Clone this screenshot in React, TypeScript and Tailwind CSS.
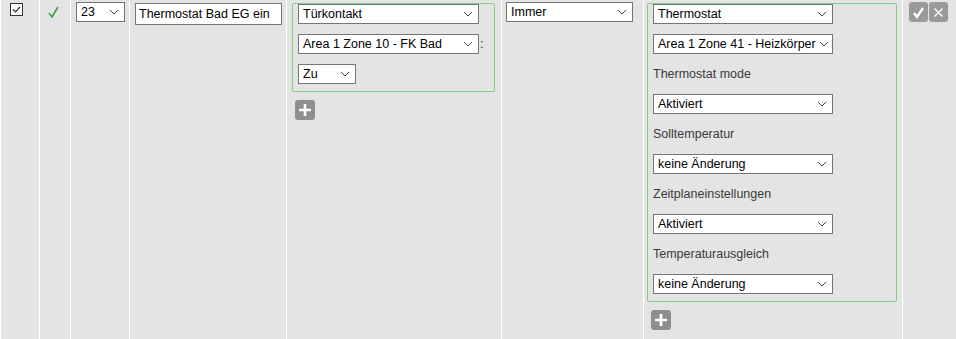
import type { ReactNode } from 'react';

const font = { fontFamily: '"Liberation Sans", Arial, sans-serif' };

function Chevron() {
  return (
    <svg width="10" height="6" viewBox="0 0 10 6" className="shrink-0">
      <path d="M1 1l4 4 4-4" fill="none" stroke="#444" strokeWidth="1" />
    </svg>
  );
}

function Select({ value, w }: { value: string; w: string }) {
  return (
    <div className={`${w} flex h-[20px] items-center justify-between gap-[3px] overflow-hidden border border-[#767676] bg-white pl-[4px] pr-[5px] text-[12.5px] leading-none text-black`}>
      <span className="whitespace-nowrap">{value}</span>
      <Chevron />
    </div>
  );
}

function PlusButton() {
  return (
    <button type="button" className="flex h-[20px] w-[20px] items-center justify-center rounded-[3px] bg-[#8e8e8e]">
      <svg width="14" height="14" viewBox="0 0 14 14">
        <path d="M7 1v12M1 7h12" stroke="#fff" strokeWidth="2.6" />
      </svg>
    </button>
  );
}

function Label({ children }: { children: ReactNode }) {
  return <div className="mt-[10px] flex h-[20px] items-center text-[12.5px] text-[#3a3a3a]">{children}</div>;
}

export default function App() {
  return (
    <div style={font} className="flex min-h-[345px] gap-px bg-white pl-px">
      {/* select row */}
      <div className="w-[38px] bg-[#e4e4e4] pl-[9px] pt-[3px]">
        <svg width="13" height="13" viewBox="0 0 13 13">
          <rect x="0.5" y="0.5" width="12" height="12" fill="#fff" stroke="#333" />
          <path d="M3 6.5l2.5 2.5 4.5-5" fill="none" stroke="#333" strokeWidth="1.2" />
        </svg>
      </div>

      {/* active */}
      <div className="w-[30px] bg-[#e4e4e4] pl-[8px] pt-[6px]">
        <svg width="11" height="12" viewBox="0 0 11 12">
          <path d="M1 7l3 4 6-10" fill="none" stroke="#3aa13a" strokeWidth="1.6" />
        </svg>
      </div>

      {/* order */}
      <div className="w-[58px] bg-[#e4e4e4] pl-[5px] pt-[2px]">
        <Select value="23" w="w-[49px]" />
      </div>

      {/* name */}
      <div className="w-[156px] bg-[#e4e4e4] pl-[5px] pt-[1px]">
        <input
          type="text"
          defaultValue="Thermostat Bad EG ein"
          className="h-[22px] w-[147px] border border-[#767676] bg-white px-[3px] text-[12.5px] text-black outline-none"
        />
      </div>

      {/* triggers */}
      <div className="w-[214px] bg-[#e4e4e4] pl-[5px] pt-[3px]">
        <div className="w-[203px] rounded-[2px] border border-[#7fd07f] pb-[7px] pl-[5px]">
          <Select value="Türkontakt" w="w-[181px]" />
          <div className="mt-[10px] flex items-center">
            <Select value="Area 1 Zone 10 - FK Bad" w="w-[181px]" />
            <span className="ml-[1px] text-[13px] text-[#333]">:</span>
          </div>
          <div className="mt-[10px]">
            <Select value="Zu" w="w-[58px]" />
          </div>
        </div>
        <div className="mt-[8px] pl-[3px]">
          <PlusButton />
        </div>
      </div>

      {/* condition */}
      <div className="w-[141px] bg-[#e4e4e4] pl-[4px] pt-[2px]">
        <Select value="Immer" w="w-[127px]" />
      </div>

      {/* actions */}
      <div className="w-[258px] bg-[#e4e4e4] pl-[3px] pt-[3px]">
        <div className="w-[250px] rounded-[2px] border border-[#7fd07f] pb-[7px] pl-[5px]">
          <Select value="Thermostat" w="w-[180px]" />
          <div className="mt-[10px]">
            <Select value="Area 1 Zone 41 - Heizkörper" w="w-[180px]" />
          </div>
          <Label>Thermostat mode</Label>
          <div className="mt-[10px]">
            <Select value="Aktiviert" w="w-[180px]" />
          </div>
          <Label>Solltemperatur</Label>
          <div className="mt-[10px]">
            <Select value="keine Änderung" w="w-[180px]" />
          </div>
          <Label>Zeitplaneinstellungen</Label>
          <div className="mt-[10px]">
            <Select value="Aktiviert" w="w-[180px]" />
          </div>
          <Label>Temperaturausgleich</Label>
          <div className="mt-[10px]">
            <Select value="keine Änderung" w="w-[180px]" />
          </div>
        </div>
        <div className="mt-[8px] pl-[4px]">
          <PlusButton />
        </div>
      </div>

      {/* row buttons */}
      <div className="flex flex-1 gap-px bg-[#e4e4e4] pl-[6px] pt-[2px]">
        <button type="button" className="flex h-[20px] w-[19px] items-center justify-center rounded-[3px] bg-[#9a9a9a]">
          <svg width="13" height="13" viewBox="0 0 13 13">
            <path d="M2 7l3 4 6-9" fill="none" stroke="#fff" strokeWidth="2.4" />
          </svg>
        </button>
        <button type="button" className="flex h-[20px] w-[19px] items-center justify-center rounded-[3px] bg-[#9a9a9a]">
          <svg width="11" height="11" viewBox="0 0 11 11">
            <path d="M1.5 1.5l8 8M9.5 1.5l-8 8" stroke="#fff" strokeWidth="1.4" />
          </svg>
        </button>
      </div>
    </div>
  );
}
